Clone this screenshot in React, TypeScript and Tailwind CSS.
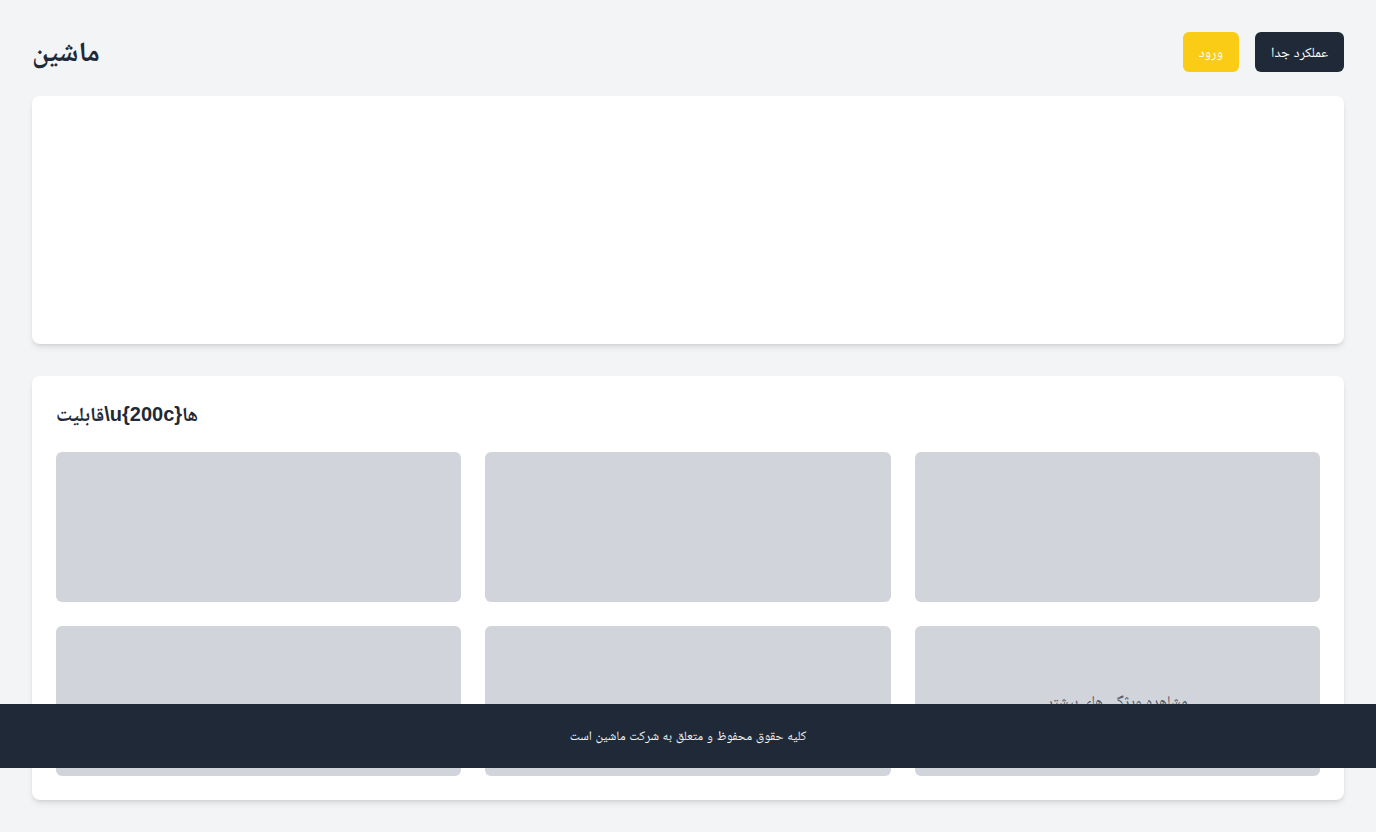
import React from 'react';

const features = [1, 2, 3, 4, 5];

export default function App() {
  return (
    <div className="min-h-screen bg-[#f3f4f6] p-8 font-['Liberation_Sans','Noto_Naskh_Arabic',sans-serif] text-[#1f2937]">
      <header className="mb-6 flex h-10 items-center justify-between">
        <h1 className="text-[28px] font-bold leading-none">ماشین</h1>
        <div className="flex gap-4">
          <button className="flex h-10 items-center rounded-md bg-[#facc15] px-4 text-sm text-white">ورود</button>
          <button className="flex h-10 items-center rounded-md bg-[#1f2937] px-4 text-sm text-white">عملکرد جدا</button>
        </div>
      </header>

      {/* hero */}
      <section className="mb-8 h-[248px] rounded-lg bg-white shadow-md"></section>

      <section className="rounded-lg bg-white p-6 shadow-md">
        <h2 className="mb-6 flex h-7 items-center text-xl font-bold">{'قابلیت\\u{200c}ها'}</h2>
        <div className="grid grid-cols-3 gap-6">
          {features.map((f) => (
            <div key={f} className="h-[150px] rounded-md bg-[#d1d5db]"></div>
          ))}
          <div className="flex h-[150px] items-center justify-center rounded-md bg-[#d1d5db]">
            <span className="text-[15px] text-[#4b5563]">مشاهده ویژگی های بیشتر</span>
          </div>
        </div>
      </section>

      <footer className="fixed inset-x-0 bottom-16 flex h-16 items-center justify-center bg-[#1f2937] text-[13px] text-gray-100">
        کلیه حقوق محفوظ و متعلق به شرکت ماشین است
      </footer>
    </div>
  );
}
